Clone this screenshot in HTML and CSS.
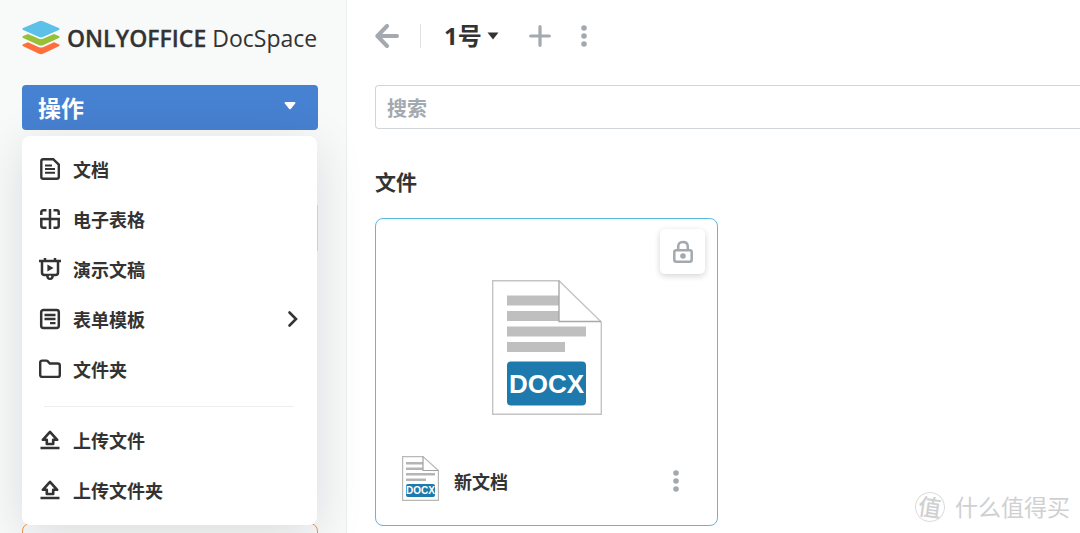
FILE: index.html
```html
<!DOCTYPE html>
<html lang="zh-CN">
<head>
<meta charset="utf-8">
<title>ONLYOFFICE DocSpace</title>
<link rel="stylesheet" href="styles.css">
</head>
<body>
<svg class="defs" aria-hidden="true">
  <symbol id="upload" viewBox="0 0 22 22">
    <path d="M11 2.8 18.2 10.8H14.2V15H7.8V10.8H3.8Z M1.500 19H20.500" fill="none" stroke="currentColor" stroke-width="2.600" stroke-linejoin="round"/>
  </symbol>
  <symbol id="dots" viewBox="0 0 8 24">
    <circle cx="4" cy="4" r="2.8"/><circle cx="4" cy="12" r="2.8"/><circle cx="4" cy="20" r="2.8"/>
  </symbol>
</svg>
<div class="app">
  <aside class="sidebar">
    <a class="logo" href="#">
      <svg class="logo-mark" viewBox="0 0 38 36" aria-hidden="true">
        <path d="M1.2 24.2 6 22.3 17 27.2Q19 28 21 27.2L32 22.3 36.8 24.2Q38.4 25.3 36.8 26.3L21 33.8Q19 34.6 17 33.8L1.2 26.3Q-.4 25.3 1.2 24.2Z" fill="#ff6f3d"/>
        <path d="M1.2 16 6 13.9 17 18.8Q19 19.6 21 18.8L32 13.9 36.8 16Q38.4 17 36.8 18L21 25.2Q19 26 17 25.2L1.2 18Q-.4 17 1.2 16Z" fill="#95c038"/>
        <path d="M1.2 8 17 1.2Q19 .4 21 1.2L36.8 8Q38.4 9 36.8 10L21 17Q19 17.8 17 17L1.2 10Q-.4 9 1.2 8Z" fill="#5dc0e8"/>
      </svg>
      <span class="logo-text"><b>ONLYOFFICE</b> DocSpace</span>
    </a>
    <div class="actions">
      <button class="action-button" type="button">操作
        <svg class="action-caret" viewBox="0 0 14 10" aria-hidden="true"><path d="M2.6 1H11.4Q13.2 1 12.2 2.6L8 7.8Q7 8.8 6 7.8L1.8 2.6Q.8 1 2.6 1Z"/></svg>
      </button>
      <div class="menu">
        <button class="menu-item" type="button">
          <svg class="icon" viewBox="0 0 22 22" aria-hidden="true"><path d="M4.3 1.2H14.2L19.8 6.6V18.8Q19.8 20.8 17.8 20.8H4.3Q2.3 20.8 2.3 18.8V3.2Q2.3 1.2 4.3 1.2Z" fill="none" stroke="currentColor" stroke-width="2.4"/><path d="M6 7.5h7M6 11h10M6 14.7h10" stroke="currentColor" stroke-width="2"/></svg>
          <span>文档</span>
        </button>
        <button class="menu-item" type="button">
          <svg class="icon" viewBox="0 0 22 22" aria-hidden="true"><path d="M11 1V21M1 11H21M7.5 2.3H4.3Q2.3 2.3 2.3 4.3V7M14.5 2.3H17.7Q19.7 2.3 19.7 4.3V7M2.3 11V17.7Q2.3 19.7 4.3 19.7H7.5M19.7 11V17.7Q19.7 19.7 17.7 19.7H14.5" fill="none" stroke="currentColor" stroke-width="2.5"/></svg>
          <span>电子表格</span>
        </button>
        <button class="menu-item" type="button">
          <svg class="icon" viewBox="0 0 22 22" aria-hidden="true"><path d="M0 3H22M3 3V14.5Q3 17 5.5 17H16.5Q19 17 19 14.5V3M6 0V3M16 0V3" fill="none" stroke="currentColor" stroke-width="2.5"/><path d="M7 17H15Q15 22 11 22Q7 22 7 17Z" fill="currentColor"/><circle cx="11" cy="18.6" r="1.2" fill="#fff"/><path d="M8.4 6.6 14.6 10 8.4 13.4Z" fill="currentColor"/></svg>
          <span>演示文稿</span>
        </button>
        <button class="menu-item" type="button">
          <svg class="icon" viewBox="0 0 22 22" aria-hidden="true"><rect x="2.2" y="2" width="17.6" height="18" rx="2.2" fill="none" stroke="currentColor" stroke-width="2.5"/><path d="M5.5 7H16.5M5.5 11H16.5M11 15.2H16.5" stroke="currentColor" stroke-width="2.3"/></svg>
          <span>表单模板</span>
          <svg class="chevron" viewBox="0 0 12 18" aria-hidden="true"><path d="M2.5 2.5 9 9 2.5 15.5" fill="none" stroke="currentColor" stroke-width="2.6" stroke-linecap="round"/></svg>
        </button>
        <button class="menu-item" type="button">
          <svg class="icon" viewBox="0 0 22 22" aria-hidden="true"><path d="M1.200 4.6Q1.200 2.6 3.200 2.6H7.2Q8.2 2.6 8.9 3.4L10.8 5.5H18.800Q20.800 5.5 20.800 7.5V16.9Q20.800 18.9 18.800 18.9H3.200Q1.200 18.9 1.200 16.9Z" fill="none" stroke="currentColor" stroke-width="2.4"/></svg>
          <span>文件夹</span>
        </button>
        <hr class="menu-separator">
        <button class="menu-item" type="button"><svg class="icon" aria-hidden="true"><use href="#upload"/></svg><span>上传文件</span></button>
        <button class="menu-item" type="button"><svg class="icon" aria-hidden="true"><use href="#upload"/></svg><span>上传文件夹</span></button>
      </div>
    </div>
    <div class="banner"></div>
    <div class="scroll-thumb"></div>
  </aside>

  <main class="content">
    <header class="toolbar">
      <button class="tool" type="button" aria-label="返回"><svg viewBox="0 0 24 24" width="24" height="24"><path d="M12 2 2.4 12 12 22M3 12H22" fill="none" stroke="currentColor" stroke-width="4" stroke-linecap="round" stroke-linejoin="round"/></svg></button>
      <span class="divider"></span>
      <button class="room" type="button">1号<svg viewBox="0 0 12 8" width="12" height="8" aria-hidden="true"><path d="M.5.5H11.5L6 7.5Z" fill="currentColor"/></svg></button>
      <button class="tool add" type="button" aria-label="新建"><svg viewBox="0 0 22 22" width="22" height="22"><path d="M11 1.7V20.3M1.7 11H20.3" stroke="currentColor" stroke-width="3.2" stroke-linecap="round"/></svg></button>
      <button class="tool" type="button" aria-label="更多"><svg class="dots"><use href="#dots"/></svg></button>
    </header>
    <input class="search" type="search" placeholder="搜索" aria-label="搜索">
    <h2 class="section-title">文件</h2>
    <article class="file-card">
      <div class="preview">
        <button class="lock" type="button" aria-label="锁定"><svg viewBox="0 0 22 24" width="22" height="24"><rect x="2.3" y="10.2" width="17.4" height="11.5" rx="2" fill="none" stroke="currentColor" stroke-width="2.5"/><path d="M6.2 10V6.7Q6.2 2 11 2Q15.8 2 15.8 6.7V10" fill="none" stroke="currentColor" stroke-width="2.5"/><circle cx="11" cy="16" r="2.8" fill="currentColor"/></svg></button>
        <svg class="doc-large" viewBox="0 0 110 135" role="img" aria-label="DOCX">
          <path d="M.7.7H67L109.3 42V134.3H.7Z" fill="#fff" stroke="#c4c4c4" stroke-width="1.4"/>
          <path d="M15 15.5H67V25.5H15ZM15 31H67V41H15ZM15 46.5H94V56.5H15ZM15 62H73V72H15Z" fill="#bfbfbf"/>
          <path d="M67 .7V41.5H109" fill="none" stroke="#a8a8a8" stroke-width="1.4"/>
          <rect x="15" y="81.500" width="79" height="44" rx="4" fill="#1e79ac"/>
          <text class="doc-label" x="54.500" y="113" text-anchor="middle" font-size="26">DOCX</text>
        </svg>
      </div>
      <footer class="file-row">
        <svg class="doc-small" viewBox="0 0 37 45" aria-hidden="true">
          <path d="M.6.600H21L36.400 14.500V44.400H.6Z" fill="#fff" stroke="#b8b8b8" stroke-width="1.200"/>
          <path d="M4 6H21V8.500H4ZM4 11.500H21V14H4ZM4 17H33V19.500H4ZM4 22.500H24V25H4Z" fill="#b5b5b5"/>
          <path d="M21 .600V14.500H36.400" fill="none" stroke="#a0a0a0" stroke-width="1.200"/>
          <rect x="4" y="28" width="29" height="13" rx="2" fill="#1e79ac"/>
          <text class="doc-label" x="18.500" y="38" text-anchor="middle" font-size="10">DOCX</text>
        </svg>
        <span class="file-name">新文档</span>
        <button class="tool" type="button" aria-label="文件菜单"><svg class="dots"><use href="#dots"/></svg></button>
      </footer>
    </article>
  </main>
  <div class="watermark"><span class="watermark-mark">值</span><span>什么值得买</span></div>
</div>
</body>
</html>
```
FILE: styles.css
```css
* { box-sizing: border-box; }
body {
  margin: 0;
  background: #fff;
  color: #333;
  font-family: "Open Sans", "Noto Sans CJK SC", sans-serif;
  overflow: hidden;
}
button {
  margin: 0;
  padding: 0;
  border: 0;
  background: none;
  color: inherit;
  font: inherit;
  cursor: pointer;
}
svg { display: block; flex: none; }
.defs { position: absolute; width: 0; height: 0; }
.app {
  position: relative;
  display: flex;
  height: 100vh;
  overflow: hidden;
}

.sidebar {
  position: relative;
  flex: 0 0 347px;
  min-width: 0;
  padding: 20px 28px 0 22px;
  background: #f8f9f9;
  border-right: 1px solid #eceeef;
}
.logo {
  display: flex;
  align-items: center;
  gap: 7px;
  height: 36px;
  color: #333;
  text-decoration: none;
  white-space: nowrap;
}
.logo-mark { width: 38px; height: 36px; }
.logo-text { font-size: 23px; line-height: 36px; }
.logo-text b { font-weight: 600; -webkit-text-stroke: 0.3px currentColor; }
.actions { position: relative; margin-top: 29px; }
.action-button {
  display: flex;
  align-items: center;
  justify-content: space-between;
  width: 100%;
  height: 45px;
  padding: 0 21px 2px 16px;
  border-radius: 4px;
  background: #4781d1;
  color: #fff;
  font-size: 23px;
  font-weight: 700;
}
.action-caret { width: 14px; height: 10px; margin-bottom: 2px; fill: #fff; }
.menu {
  position: absolute;
  z-index: 2;
  top: 51px;
  left: 0;
  right: 1px;
  padding: 8px 0 10px;
  border-radius: 8px;
  background: #fff;
  box-shadow: 0 10px 50px rgba(4, 15, 27, 0.12);
}
.menu-item {
  display: flex;
  align-items: center;
  gap: 12px;
  width: 100%;
  height: 50px;
  padding: 0 18px 0 17px;
  font-size: 18px;
  font-weight: 700;
}
.icon { width: 22px; height: 22px; }
.chevron { width: 12px; height: 18px; margin-left: auto; }
.menu-separator {
  height: 1px;
  margin: 12px 23px 8px 22px;
  border: 0;
  background: #eceef0;
}
.banner {
  height: 80px;
  margin-top: 393px;
  border: 1px solid #f0964b;
  border-radius: 8px;
}
.scroll-thumb {
  position: absolute;
  top: 205px;
  right: 28px;
  width: 1px;
  height: 46px;
  background: #d8dee0;
}

.content { flex: 1; min-width: 0; padding: 16px 0 0 28px; }
.toolbar { display: flex; align-items: center; height: 40px; }
.tool { display: flex; color: #a3a9ae; }
.divider { width: 1px; height: 24px; margin: 0 23px 0 21px; background: #dfe2e5; }
.room {
  display: flex;
  align-items: center;
  gap: 5px;
  font-size: 24px;
  font-weight: 700;
  line-height: 40px;
}
.add { margin: 0 29px 0 30px; }
.dots { width: 8px; height: 24px; fill: #a3a9ae; }
.search {
  display: block;
  width: 100%;
  height: 44px;
  margin: 29px 0 0;
  padding: 2px 11px 0;
  border: 1px solid #d0d5da;
  border-right: 0;
  border-radius: 4px 0 0 4px;
  outline: 0;
  background: #fff;
  color: #333;
  font: 700 20px "Open Sans", "Noto Sans CJK SC", sans-serif;
}
.search::placeholder { color: #a3a9ae; opacity: 1; }
.section-title { margin: 38px 0 20px; font-size: 21px; line-height: 31px; }
.file-card {
  width: 343px;
  border: 1px solid #5cb9e2;
  border-radius: 8px;
  background: #fff;
}
.preview {
  position: relative;
  display: flex;
  justify-content: center;
  padding: 61px 0 21px;
}
.lock {
  position: absolute;
  top: 10px;
  right: 12px;
  display: grid;
  place-items: center;
  width: 45px;
  height: 45px;
  border-radius: 5px;
  background: #fff;
  color: #a3a9ae;
  box-shadow: 0 2px 6px rgba(4, 15, 27, 0.18);
}
.doc-large { width: 110px; height: 135px; }
.doc-label { fill: #fff; font-family: "Liberation Sans", sans-serif; font-weight: 700; }
.file-row {
  display: flex;
  align-items: center;
  height: 89px;
  padding: 0 37px 0 26px;
}
.doc-small { width: 37px; height: 45px; margin-bottom: 4px; }
.file-name { flex: 1; margin-left: 15px; font-size: 18px; font-weight: 700; }

.watermark {
  position: absolute;
  right: 10px;
  bottom: 9px;
  display: flex;
  align-items: center;
  gap: 10px;
  color: #d0d0d0;
  font-size: 23px;
  line-height: 34px;
}
.watermark-mark {
  width: 30px;
  height: 30px;
  border: 1px solid #dcdcdc;
  border-radius: 50%;
  font-size: 23px;
  font-weight: 500;
  line-height: 28px;
  text-align: center;
  transform: rotate(8deg);
}
```
